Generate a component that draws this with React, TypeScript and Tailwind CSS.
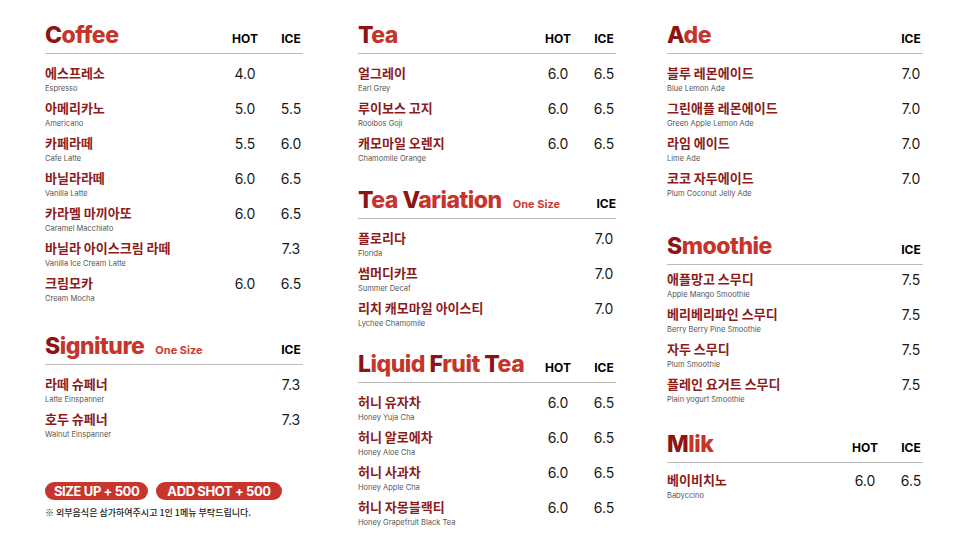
type Item = { ko: string; en: string; hot?: string; ice?: string };

type SectionProps = {
  title: string;
  oneSize?: boolean;
  hot?: boolean;
  items: Item[];
  className?: string;
  listClass?: string;
};

const coffee: Item[] = [
  { ko: "에스프레소", en: "Espresso", hot: "4.0" },
  { ko: "아메리카노", en: "Americano", hot: "5.0", ice: "5.5" },
  { ko: "카페라떼", en: "Cafe Latte", hot: "5.5", ice: "6.0" },
  { ko: "바닐라라떼", en: "Vanilla Latte", hot: "6.0", ice: "6.5" },
  { ko: "카라멜 마끼아또", en: "Caramel Macchiato", hot: "6.0", ice: "6.5" },
  { ko: "바닐라 아이스크림 라떼", en: "Vanilla Ice Cream Latte", ice: "7.3" },
  { ko: "크림모카", en: "Cream Mocha", hot: "6.0", ice: "6.5" },
];

const signiture: Item[] = [
  { ko: "라떼 슈페너", en: "Latte Einspanner", ice: "7.3" },
  { ko: "호두 슈페너", en: "Walnut Einspanner", ice: "7.3" },
];

const tea: Item[] = [
  { ko: "얼그레이", en: "Earl Grey", hot: "6.0", ice: "6.5" },
  { ko: "루이보스 고지", en: "Rooibos Goji", hot: "6.0", ice: "6.5" },
  { ko: "캐모마일 오렌지", en: "Chamomile Orange", hot: "6.0", ice: "6.5" },
];

const teaVariation: Item[] = [
  { ko: "플로리다", en: "Florida", ice: "7.0" },
  { ko: "썸머디카프", en: "Summer Decaf", ice: "7.0" },
  { ko: "리치 캐모마일 아이스티", en: "Lychee Chamomile", ice: "7.0" },
];

const liquid: Item[] = [
  { ko: "허니 유자차", en: "Honey Yuja Cha", hot: "6.0", ice: "6.5" },
  { ko: "허니 알로에차", en: "Honey Aloe Cha", hot: "6.0", ice: "6.5" },
  { ko: "허니 사과차", en: "Honey Apple Cha", hot: "6.0", ice: "6.5" },
  { ko: "허니 자몽블랙티", en: "Honey Grapefruit Black Tea", hot: "6.0", ice: "6.5" },
];

const ade: Item[] = [
  { ko: "블루 레몬에이드", en: "Blue Lemon Ade", ice: "7.0" },
  { ko: "그린애플 레몬에이드", en: "Green Apple Lemon Ade", ice: "7.0" },
  { ko: "라임 에이드", en: "Lime Ade", ice: "7.0" },
  { ko: "코코 자두에이드", en: "Plum Coconut Jelly Ade", ice: "7.0" },
];

const smoothie: Item[] = [
  { ko: "애플망고 스무디", en: "Apple Mango Smoothie", ice: "7.5" },
  { ko: "베리베리파인 스무디", en: "Berry Berry Pine Smoothie", ice: "7.5" },
  { ko: "자두 스무디", en: "Plum Smoothie", ice: "7.5" },
  { ko: "플레인 요거트 스무디", en: "Plain yogurt Smoothie", ice: "7.5" },
];

const milk: Item[] = [{ ko: "베이비치노", en: "Babyccino", hot: "6.0", ice: "6.5" }];

const ko = { fontFamily: '"Noto Sans CJK KR", "Noto Sans", sans-serif' };
const sans = { fontFamily: 'Inter, "Noto Sans CJK KR", sans-serif' };

function Title({ text }: { text: string }) {
  // capitals are set darker than the rest of the word
  return (
    <span className="shrink-0 whitespace-nowrap text-[23px] leading-[28px] font-extrabold tracking-[-0.5px] text-[#c6352c]" style={sans}>
      {text.split("").map((ch, i) =>
        /[A-Z]/.test(ch) ? (
          <span key={i} className="text-[#8b1515]">
            {ch}
          </span>
        ) : (
          ch
        )
      )}
    </span>
  );
}

function Section({ title, oneSize, hot, items, className, listClass }: SectionProps) {
  return (
    <div className={className}>
      <div className="flex items-baseline border-b border-[#bcbcbc] pb-[4px]">
        <Title text={title} />
        {oneSize && (
          <span className="ml-[11px] shrink-0 whitespace-nowrap text-[11px] font-bold text-[#cf3b33]" style={sans}>
            One Size
          </span>
        )}
        <div className="flex-1" />
        <div className="flex w-[24px] justify-center whitespace-nowrap text-[12px] font-bold text-black" style={sans}>
          {hot ? "HOT" : ""}
        </div>
        <div className="ml-[22px] flex w-[24px] justify-center whitespace-nowrap text-[12px] font-bold text-black" style={sans}>
          ICE
        </div>
      </div>
      <div className={listClass}>
        {items.map((it) => (
          <div key={it.ko} className="flex h-[35px]">
            <div className="flex flex-1 flex-col">
              <div className="text-[13px] leading-[18px] font-bold text-[#8c1c1c]" style={ko}>
                {it.ko}
              </div>
              <div className="mt-[1px] text-[7.5px] leading-[12px] text-[#555]" style={sans}>
                {it.en}
              </div>
            </div>
            <div className="flex h-[18px] w-[24px] justify-center text-[14px] leading-[19px] text-[#1a1a1a]" style={sans}>
              {it.hot ?? ""}
            </div>
            <div className="ml-[22px] flex h-[18px] w-[24px] justify-center text-[14px] leading-[19px] text-[#1a1a1a]" style={sans}>
              {it.ice ?? ""}
            </div>
          </div>
        ))}
      </div>
    </div>
  );
}

export default function App() {
  return (
    <div className="flex h-[543px] w-[966px] overflow-hidden bg-white pt-[21px] pl-[45px]">
      <div className="mr-[55px] w-[258px]">
        <Section title="Coffee" hot items={coffee} listClass="pt-[10px]" />
        <Section title="Signiture" oneSize items={signiture} className="mt-[23px]" listClass="pt-[10px]" />
        <div className="mt-[37px] flex gap-[8px]">
          <span className="h-[18px] rounded-full bg-[#c8352c] px-[9px] text-[13px] leading-[18px] font-bold tracking-[-0.4px] text-white" style={sans}>
            SIZE UP + 500
          </span>
          <span className="h-[18px] rounded-full bg-[#c8352c] px-[11px] text-[13px] leading-[18px] font-bold tracking-[-0.4px] text-white" style={sans}>
            ADD SHOT + 500
          </span>
        </div>
        <div className="mt-[7px] text-[9px] leading-[12px] font-medium text-[#222]" style={ko}>
          ※ 외부음식은 삼가하여주시고 1인 1메뉴 부탁드립니다.
        </div>
      </div>
      <div className="mr-[51px] w-[258px]">
        <Section title="Tea" hot items={tea} listClass="pt-[10px]" />
        <Section title="Tea Variation" oneSize items={teaVariation} className="mt-[17px]" listClass="pt-[10px]" />
        <Section title="Liquid Fruit Tea" hot items={liquid} className="mt-[16px]" listClass="pt-[10px]" />
      </div>
      <div className="w-[256px]">
        <Section title="Ade" items={ade} listClass="pt-[10px]" />
        <Section title="Smoothie" items={smoothie} className="mt-[28px]" listClass="pt-[5px]" />
        <Section title="Mlik" hot items={milk} className="mt-[20px]" listClass="pt-[8px]" />
      </div>
    </div>
  );
}
